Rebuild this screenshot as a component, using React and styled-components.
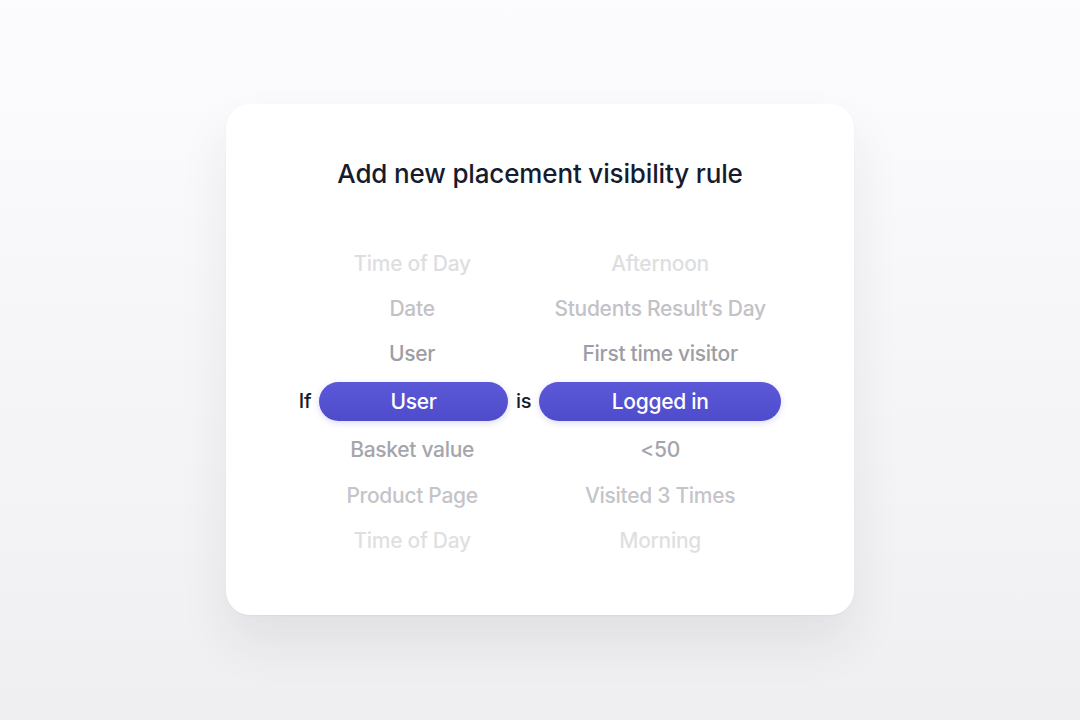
import React from "react";
import styled, { createGlobalStyle } from "styled-components";

const GlobalStyle = createGlobalStyle`
  html, body {
    margin: 0;
    padding: 0;
  }
  body {
    font-family: Inter, "Noto Sans", sans-serif;
    -webkit-font-smoothing: antialiased;
  }
`;

const rows = [
  { left: "Time of Day", right: "Afternoon", shade: "#dedee1" },
  { left: "Date", right: "Students Result’s Day", shade: "#c2c2c7" },
  { left: "User", right: "First time visitor", shade: "#9d9da4" },
  { active: true, left: "User", right: "Logged in" },
  { left: "Basket value", right: "<50", shade: "#a5a5ab" },
  { left: "Product Page", right: "Visited 3 Times", shade: "#c4c4c9" },
  { left: "Time of Day", right: "Morning", shade: "#dfdfe2" },
];

const App = () => {
  return (
    <Page>
      <GlobalStyle />
      <Card>
        <Title>Add new placement visibility rule</Title>
        <Rules>
          {rows.map((row, i) =>
            row.active ? (
              <React.Fragment key={i}>
                <Word>If</Word>
                <Pill>{row.left}</Pill>
                <Word>is</Word>
                <Pill>{row.right}</Pill>
              </React.Fragment>
            ) : (
              <React.Fragment key={i}>
                <span />
                <Option color={row.shade} $side="left">
                  {row.left}
                </Option>
                <span />
                <Option color={row.shade}>{row.right}</Option>
              </React.Fragment>
            )
          )}
        </Rules>
      </Card>
    </Page>
  );
};

const Page = styled.div`
  width: 1080px;
  height: 720px;
  display: flex;
  align-items: flex-start;
  justify-content: center;
  padding-top: 104px;
  box-sizing: border-box;
  background: linear-gradient(180deg, #fcfbfd 0%, #f5f4f6 55%, #efeef0 100%);
  overflow: hidden;
`;

const Card = styled.div`
  width: 628px;
  height: 511px;
  box-sizing: border-box;
  padding: 54px 0 0;
  display: flex;
  flex-direction: column;
  align-items: center;
  background: #ffffff;
  border-radius: 24px;
  box-shadow: 0 1px 2px rgba(20, 20, 40, 0.04), 0 28px 50px rgba(40, 36, 60, 0.08);
`;

const Title = styled.h1`
  margin: 0;
  font-size: 26px;
  line-height: 32px;
  font-weight: 500;
  letter-spacing: -0.15px;
  color: #161b2e;
`;

const Rules = styled.div`
  margin-top: 51px;
  display: grid;
  grid-template-columns: auto 189px auto 242px;
  grid-template-rows: 45px 45px 45px 50px 47px 45px 45px;
  column-gap: 8px;
  align-items: center;
`;

const Option = styled.div`
  text-align: center;
  padding-right: ${(p) => (p.$side === "left" ? "3px" : "0")};
  font-size: 21px;
  font-weight: 500;
  letter-spacing: -0.3px;
  color: ${(p) => p.color};
  white-space: nowrap;
`;

const Word = styled.span`
  font-size: 20px;
  font-weight: 500;
  letter-spacing: -0.4px;
  color: #161b2e;
`;

const Pill = styled.div`
  height: 39px;
  border-radius: 20px;
  display: flex;
  align-items: center;
  justify-content: center;
  font-size: 21px;
  font-weight: 500;
  letter-spacing: -0.3px;
  color: #ffffff;
  background: linear-gradient(180deg, #5b59d8 0%, #4f4ccc 100%);
  box-shadow: 0 2px 6px rgba(60, 55, 180, 0.18);
`;

export default App;
